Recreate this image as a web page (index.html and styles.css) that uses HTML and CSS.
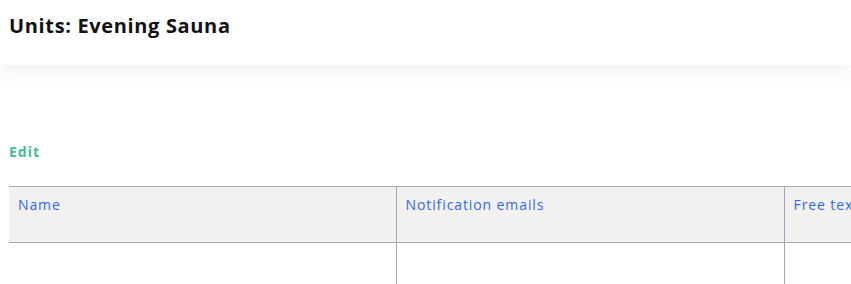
FILE: index.html
```html
<!DOCTYPE html>
<html>
<head>
<meta charset="utf-8">
<link rel="stylesheet" href="styles.css">
</head>
<body>
<header class="topbar">
  <h1 class="title">Units: Evening Sauna</h1>
</header>
<main class="content">
  <a class="edit" href="#">Edit</a>
  <div class="table-wrap">
    <table class="units">
      <colgroup>
        <col class="col-first">
        <col class="col">
        <col class="col">
      </colgroup>
      <thead>
        <tr>
          <th>Name</th>
          <th>Notification emails</th>
          <th>Free text</th>
        </tr>
      </thead>
      <tbody>
        <tr>
          <td></td>
          <td></td>
          <td></td>
        </tr>
      </tbody>
    </table>
  </div>
</main>
</body>
</html>
```

FILE: styles.css
```css
html, body {
  margin: 0;
  padding: 0;
  background: #fff;
  font-family: "Open Sans", "DejaVu Sans", sans-serif;
  overflow: hidden;
}
.topbar {
  height: 65px;
  background: #fff;
  box-shadow: 0 6px 18px rgba(120, 130, 150, 0.12);
  display: flex;
  align-items: flex-start;
  padding: 0 9px;
  position: relative;
}
.title {
  margin: 12px 0 0;
  font-size: 20px;
  font-weight: 700;
  color: #111;
  letter-spacing: 0.65px;
}
.content {
  padding: 77px 0 0 9px;
}
.edit {
  display: block;
  font-size: 14px;
  font-weight: 700;
  color: #45bb97;
  text-decoration: none;
  line-height: 20px;
  letter-spacing: 1px;
}
.table-wrap {
  margin-top: 24px;
  width: 842px;
  overflow: hidden;
}
.units {
  border-collapse: collapse;
  table-layout: fixed;
  width: 1163px;
}
.col-first { width: 387px; }
.col { width: 388px; }
.units th, .units td {
  border-top: 1px solid #a3a8ba;
  border-bottom: 1px solid #a3a8ba;
  border-left: 1px solid #a3a8ba;
  text-align: left;
  vertical-align: top;
}
.units th:first-child, .units td:first-child {
  border-left: none;
}
.units th {
  background: #f2f1f0;
  color: #2f68f0;
  font-weight: 400;
  font-size: 14px;
  letter-spacing: 0.9px;
  white-space: nowrap;
  height: 56px;
  padding: 8px 8px 0 9px;
  box-sizing: border-box;
}
.units td {
  height: 60px;
}
```
